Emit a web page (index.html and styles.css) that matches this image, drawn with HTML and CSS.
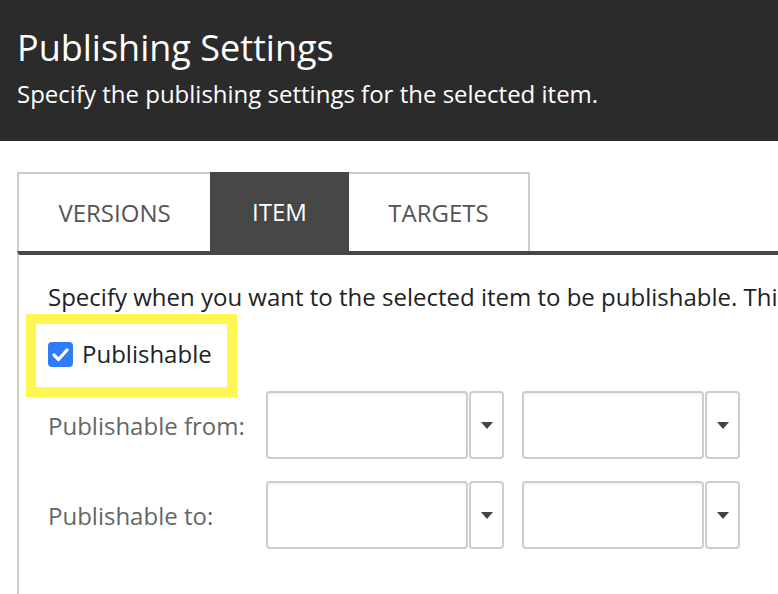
FILE: index.html
```html
<!DOCTYPE html>
<html>
<head>
  <meta charset="utf-8">
  <title>Publishing Settings</title>
  <link rel="stylesheet" href="styles.css">
</head>
<body>
  <header class="page_header">
    <h1>Publishing Settings</h1>
    <p>Specify the publishing settings for the selected item.</p>
  </header>

  <div class="tabs">
    <div class="tab versions">VERSIONS</div>
    <div class="tab item active">ITEM</div>
    <div class="tab targets">TARGETS</div>
  </div>

  <div class="panel">
    <p class="intro">Specify when you want to the selected item to be publishable. This</p>

    <label class="publishable">
      <span class="check">
        <svg width="25" height="25" viewBox="0 0 25 25">
          <path d="M6 13 L10.5 17.5 L19 8" fill="none" stroke="#fff" stroke-width="3.2" stroke-linecap="round" stroke-linejoin="round"/>
        </svg>
      </span>
      Publishable
    </label>

    <div class="field_row">
      <span class="field_label">Publishable from:</span>
      <div class="date_box wide"></div>
      <div class="drop_btn"><span class="arrow"></span></div>
      <div class="date_box narrow"></div>
      <div class="drop_btn"><span class="arrow"></span></div>
    </div>

    <div class="field_row">
      <span class="field_label">Publishable to:</span>
      <div class="date_box wide"></div>
      <div class="drop_btn"><span class="arrow"></span></div>
      <div class="date_box narrow"></div>
      <div class="drop_btn"><span class="arrow"></span></div>
    </div>
  </div>
</body>
</html>
```

FILE: styles.css
```css
body {
	margin: 0;
	font-family: "Open Sans", "Liberation Sans", sans-serif;
	background: #fff;
	overflow: hidden;
}
.page_header {
	background: #2b2b2b;
	color: #fff;
	height: 141px;
	padding: 24px 0 0 17px;
	box-sizing: border-box;
}
.page_header h1 {
	font-size: 36px;
	font-weight: 400;
	line-height: 48px;
	margin: 0;
}
.page_header p {
	font-size: 24px;
	line-height: 32px;
	margin: 6px 0 0 0;
}
.tabs {
	display: flex;
	width: max-content;
	margin: 31px 0 0 17px;
	border: 2px solid #cdcdcd;
	border-bottom: 0;
}
.tab {
	font-size: 24px;
	line-height: 77px;
	text-align: center;
	color: #555;
}
.tab.versions {
	width: 191px;
}
.tab.item {
	width: 139px;
}
.tab.targets {
	width: 179px;
}
.tab.active {
	background: #474747;
	color: #fff;
	margin-top: -2px;
	line-height: 79px;
}
.panel {
	margin-left: 17px;
	border-top: 4px solid #474747;
	border-left: 2px solid #cdcdcd;
	padding: 26px 0 0 29px;
	height: 313px;
	overflow: hidden;
}
.intro {
	font-size: 24px;
	line-height: 32px;
	color: #222;
	margin: 0;
	white-space: nowrap;
}
.publishable {
	display: flex;
	align-items: center;
	gap: 9px;
	width: max-content;
	font-size: 24px;
	line-height: 32px;
	color: #222;
	margin: 11px 0 4px -12px;
	padding: 14px 15px 17px 12px;
	outline: 10px solid #fff74f;
	outline-offset: -10px;
	border: 10px solid transparent;
	margin-left: -22px;
	margin-top: 1px;
	margin-bottom: -6px;
}
.check {
	display: block;
	width: 25px;
	height: 25px;
	border-radius: 4px;
	background: #2f7cf6;
}
.check svg {
	display: block;
}
.field_row {
	display: flex;
	align-items: center;
	margin-bottom: 22px;
}
.field_label {
	width: 218px;
	font-size: 24px;
	color: #666;
}
.date_box, .drop_btn {
	height: 68px;
	box-sizing: border-box;
	border: 2px solid #cdcdcd;
	border-radius: 4px;
	box-shadow: inset 0 2px 2px rgba(0, 0, 0, 0.05);
}
.date_box.wide {
	width: 202px;
}
.date_box.narrow {
	width: 182px;
}
.drop_btn {
	width: 35px;
	margin: 0 18px 0 1px;
	display: flex;
	align-items: center;
	justify-content: center;
	box-shadow: none;
}
.arrow {
	border-left: 6px solid transparent;
	border-right: 6px solid transparent;
	border-top: 7px solid #444;
}
```
